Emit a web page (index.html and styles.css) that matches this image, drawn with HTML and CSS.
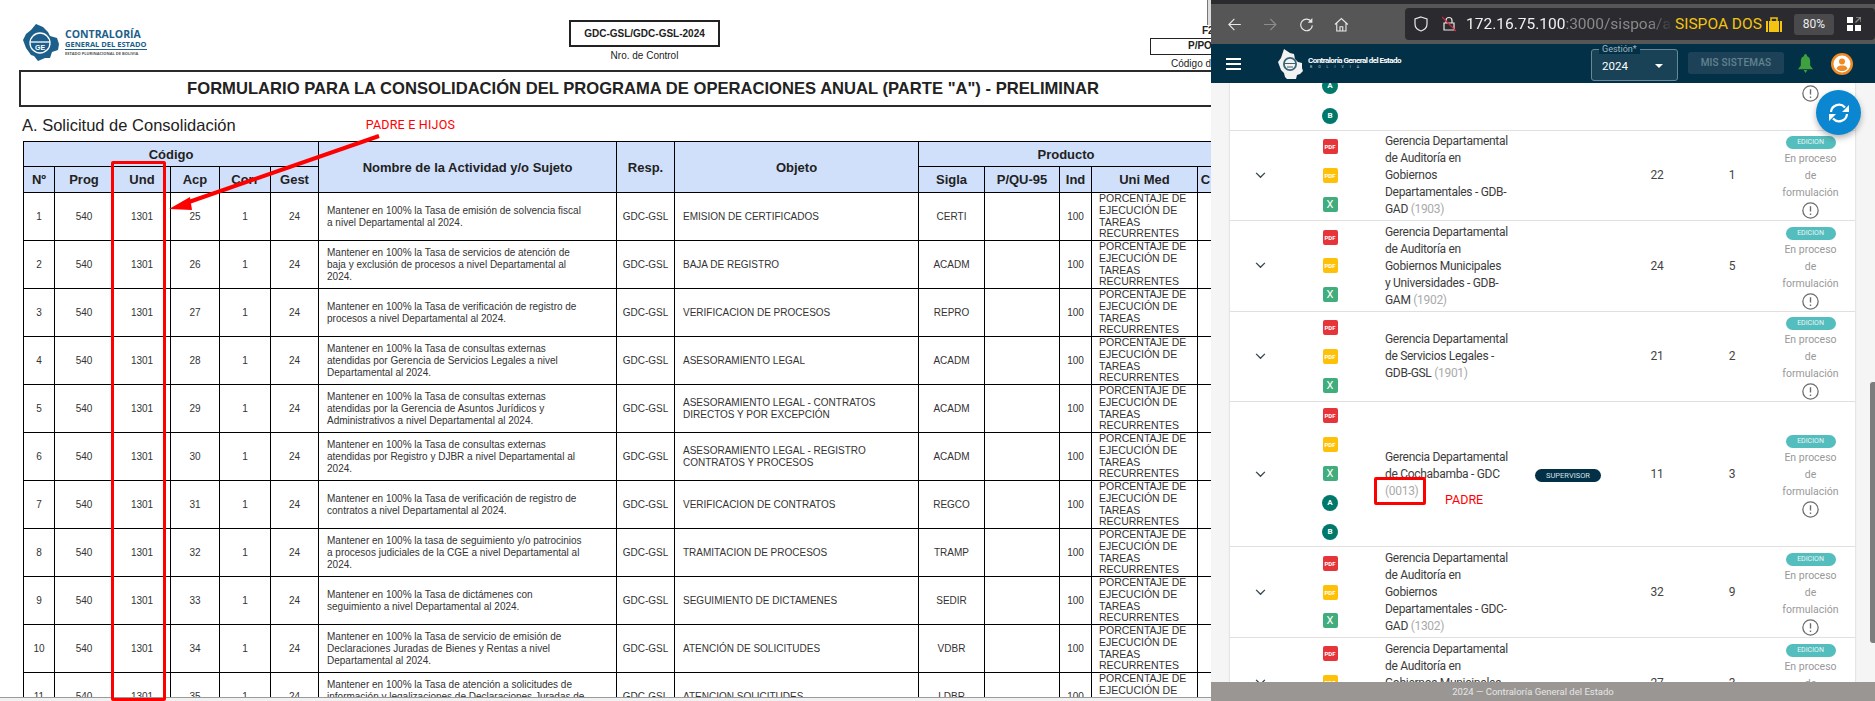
FILE: index.html
```html
<!DOCTYPE html>
<html lang="es">
<head>
  <meta charset="UTF-8" />
  <title>Formulario POA y SISPOA</title>
  <link rel="stylesheet" href="styles.css">
</head>
<body>
  <div class="shot">
    <main class="doc">
      <div class="doc-top">
        <div class="brand">
          <svg class="brand-map" viewBox="0 0 37 40"><path d="M8 8l5-6 7 3 5 5 2 4 7 2 2 6-1 6-6 2-2 6h-5l-7 3-4-5-3-1-5-7-3-8 3-6z" fill="#1d5f8a"/><circle cx="17" cy="21" r="10" fill="none" stroke="#fff" stroke-width="1.3"/><path d="M7 20h20" stroke="#fff" stroke-width="1.3"/><text x="17" y="28" class="brand-ge">GE</text></svg>
          <div class="brand-text">
            <div class="brand-a">CONTRALORÍA</div>
            <div class="brand-b">GENERAL DEL ESTADO</div>
            <div class="brand-c">ESTADO PLURINACIONAL DE BOLIVIA</div>
          </div>
        </div>
        <div class="control">
          <div class="control-box">GDC-GSL/GDC-GSL-2024</div>
          <div class="control-label">Nro. de Control</div>
        </div>
        <div class="code">
          <div class="code-f">F2</div>
          <div class="code-box">P/POA</div>
          <div class="code-label">Código de Formulario</div>
        </div>
      </div>
      <h1 class="doc-title">FORMULARIO PARA LA CONSOLIDACIÓN DEL PROGRAMA DE OPERACIONES ANUAL (PARTE "A") - PRELIMINAR</h1>
      <div class="doc-sub">
        <h2>A. Solicitud de Consolidación</h2>
        <span class="note">PADRE E HIJOS</span>
      </div>
      <table class="poa">
        <colgroup>
          <col class="c-n"><col class="c-prog"><col class="c-und"><col class="c-acp"><col class="c-corr"><col class="c-gest">
          <col class="c-name"><col class="c-resp"><col class="c-obj"><col class="c-sigla"><col class="c-pqu"><col class="c-ind"><col class="c-uni"><col class="c-c">
        </colgroup>
        <thead>
          <tr>
            <th colspan="6">Código</th>
            <th rowspan="2">Nombre de la Actividad y/o Sujeto</th>
            <th rowspan="2">Resp.</th>
            <th rowspan="2">Objeto</th>
            <th colspan="5">Producto</th>
          </tr>
          <tr class="head-sub">
            <th>Nº</th><th>Prog</th><th>Und</th><th>Acp</th><th>Corr</th><th>Gest</th>
            <th>Sigla</th><th>P/QU-95</th><th>Ind</th><th>Uni Med</th><th>C</th>
          </tr>
        </thead>
        <tbody id="poa-rows"></tbody>
      </table>
      <div class="screen-edge"></div>
      <div class="pdf-scroll"></div>
      <div class="und-mark"></div>
      <svg class="arrow" viewBox="0 0 214 77"><path d="M211 2L18 69" stroke="#f00" stroke-width="4"/><path d="M1 75l21-12 2 13z" fill="#f00"/></svg>
    </main>

    <section class="browser">
      <div class="chrome-strip"></div>
      <div class="toolbar">
        <svg class="tb-icon" viewBox="0 0 16 16"><path d="M15 8H2M8 2L2 8l6 6" fill="none" stroke="#e8e8e8" stroke-width="1.2"/></svg>
        <svg class="tb-icon" viewBox="0 0 16 16"><path d="M1 8h13M8 2l6 6-6 6" fill="none" stroke="#8d8d8d" stroke-width="1.2"/></svg>
        <svg class="tb-icon" viewBox="0 0 16 16"><path d="M13.5 5A6.3 6.3 0 1 0 14.5 9" fill="none" stroke="#e8e8e8" stroke-width="1.3"/><path d="M14.5 1v5h-5z" fill="#e8e8e8"/></svg>
        <svg class="tb-icon" viewBox="0 0 16 16"><path d="M1 8l7-6.5L15 8M3 6.5V15h10V6.5M6.5 15v-4.5h3V15" fill="none" stroke="#e8e8e8" stroke-width="1.2"/></svg>
        <div class="urlbar">
          <svg class="url-shield" viewBox="0 0 14 16"><path d="M7 1l6 2v5c0 4-3 6-6 7-3-1-6-3-6-7V3z" fill="none" stroke="#e8e8e8" stroke-width="1.2"/></svg>
          <svg class="url-lock" viewBox="0 0 14 16"><path d="M4 7V4.500a3 3 0 0 1 6 0V7M2 7h10v7H2z" fill="none" stroke="#e8e8e8" stroke-width="1.2"/><path d="M0 1l14 14" stroke="#e0243c" stroke-width="1.2"/></svg>
          <span class="url-text">172.16.75.100<span class="url-dim">:3000/sispoa/a</span></span>
          <span class="url-name">SISPOA DOS</span>
          <svg class="url-bag" viewBox="0 0 16 15"><path d="M0 4h2v11H0zM3 4h10v11H3zM14 4h2v11h-2z" fill="#f2c40f"/><path d="M5 4V1h6v3" fill="none" stroke="#f2c40f" stroke-width="1.5"/></svg>
          <span class="url-zoom">80%</span>
          <svg class="url-grid" viewBox="0 0 14 14"><path d="M0 0h6v6H0zM0 8h6v6H0zM8 8h6v6H8z" fill="#fff"/><path d="M9 0h5v5M14 0L8.5 5.500" fill="none" stroke="#8a8a8a" stroke-width="1.3"/></svg>
        </div>
      </div>
      <header class="appbar">
        <div class="burger"><i></i><i></i><i></i></div>
        <svg class="app-map" viewBox="0 0 25 30"><path d="M6 0l6 4 4 1 1 5 3 3 4 1v5l1 3-3 3-3 1-1 4-5 0-4 0-2-2-1-4-3-3-3-8 3-4z" fill="#f2f2f2"/><circle cx="12" cy="15" r="7" fill="#3b6275"/><circle cx="12" cy="15" r="5.2" fill="#f2f2f2"/><path d="M6 14.500h12M9 18h6" stroke="#3b6275" stroke-width="1.2"/></svg>
        <div class="app-name">
          <div class="app-name-a">Contraloría General del Estado</div>
          <div class="app-name-b">BOLIVIA</div>
        </div>
        <div class="gestion">
          <span class="gestion-label">Gestión*</span>
          <span class="gestion-val">2024</span>
          <span class="caret"></span>
        </div>
        <button class="mis">MIS SISTEMAS</button>
        <svg class="bell" viewBox="0 0 16 20"><path d="M8 0a1.500 1.500 0 0 1 1.500 2C12 3 13 5 13 8v4l3 4H0l3-4V8c0-3 1-5 3.500-6A1.500 1.500 0 0 1 8 0zM6 17h4l-2 3z" fill="#3ea13e"/></svg>
        <svg class="avatar" viewBox="0 0 22 22"><circle cx="11" cy="11" r="11" fill="#f08a24"/><circle cx="11" cy="11" r="8.5" fill="#fff"/><circle cx="11" cy="8.5" r="3" fill="#f08a24"/><path d="M5.500 15.500c1-2.500 3-3 5.500-3s4.500.5 5.500 3c-1.500 2-3.500 2.500-5.500 2.500s-4-.5-5.500-2.500z" fill="#f08a24"/></svg>
      </header>
      <div class="content">
        <div class="list" id="unit-list"></div>
        <span class="scroll-thumb"></span>
      </div>
      <button class="fab">
        <svg viewBox="0 0 24 24"><path d="M4 11a8 8 0 0 1 14-4.500M20 13a8 8 0 0 1-14 4.500" fill="none" stroke="#fff" stroke-width="2.2"/><path d="M22 4v7h-7zM2 20v-7h7z" fill="#fff"/></svg>
      </button>
      <footer class="app-foot">2024 — Contraloría General del Estado</footer>
      <div class="padre-mark"></div>
      <span class="padre-note">PADRE</span>
    </section>
  </div>

  <script>
    const rows = [
      ["25", "Mantener en 100% la Tasa de emisión de solvencia fiscal<br>a nivel Departamental al 2024.", "EMISION DE CERTIFICADOS", "CERTI"],
      ["26", "Mantener en 100% la Tasa de servicios de atención de<br>baja y exclusión de procesos a nivel Departamental al<br>2024.", "BAJA DE REGISTRO", "ACADM"],
      ["27", "Mantener en 100% la Tasa de verificación de registro de<br>procesos a nivel Departamental al 2024.", "VERIFICACION DE PROCESOS", "REPRO"],
      ["28", "Mantener en 100% la Tasa de consultas externas<br>atendidas por Gerencia de Servicios Legales a nivel<br>Departamental al 2024.", "ASESORAMIENTO LEGAL", "ACADM"],
      ["29", "Mantener en 100% la Tasa de consultas externas<br>atendidas por la Gerencia de Asuntos Jurídicos y<br>Administrativos a nivel Departamental al 2024.", "ASESORAMIENTO LEGAL - CONTRATOS<br>DIRECTOS Y POR EXCEPCIÓN", "ACADM"],
      ["30", "Mantener en 100% la Tasa de consultas externas<br>atendidas por Registro y DJBR a nivel Departamental al<br>2024.", "ASESORAMIENTO LEGAL - REGISTRO<br>CONTRATOS Y PROCESOS", "ACADM"],
      ["31", "Mantener en 100% la Tasa de verificación de registro de<br>contratos a nivel Departamental al 2024.", "VERIFICACION DE CONTRATOS", "REGCO"],
      ["32", "Mantener en 100% la tasa de seguimiento y/o patrocinios<br>a procesos judiciales de la CGE a nivel Departamental al<br>2024.", "TRAMITACION DE PROCESOS", "TRAMP"],
      ["33", "Mantener en 100% la Tasa de dictámenes con<br>seguimiento a  nivel Departamental al 2024.", "SEGUIMIENTO DE DICTAMENES", "SEDIR"],
      ["34", "Mantener en 100% la Tasa de servicio de emisión de<br>Declaraciones Juradas de Bienes y Rentas a nivel<br>Departamental al 2024.", "ATENCIÓN DE SOLICITUDES", "VDBR"],
      ["35", "Mantener en 100% la Tasa de atención a solicitudes de<br>información y legalizaciones de  Declaraciones Juradas de<br>Bienes y Rentas.", "ATENCION SOLICITUDES", "LDBR"]
    ];

    const units = [
      { name: "Gerencia Departamental<br>de La Paz - GDL<br>", code: "0012", a: "", b: "", parent: true },
      { name: "Gerencia Departamental<br>de Auditoría en<br>Gobiernos<br>Departamentales - GDB-<br>GAD", code: "1903", a: "22", b: "1" },
      { name: "Gerencia Departamental<br>de Auditoría en<br>Gobiernos Municipales<br>y Universidades - GDB-<br>GAM", code: "1902", a: "24", b: "5" },
      { name: "Gerencia Departamental<br>de Servicios Legales -<br>GDB-GSL", code: "1901", a: "21", b: "2" },
      { name: "Gerencia Departamental<br>de Cochabamba - GDC<br>", code: "0013", a: "11", b: "3", parent: true, chip: true },
      { name: "Gerencia Departamental<br>de Auditoría en<br>Gobiernos<br>Departamentales - GDC-<br>GAD", code: "1302", a: "32", b: "9" },
      { name: "Gerencia Departamental<br>de Auditoría en<br>Gobiernos Municipales<br>y Universidades - GDC-<br>GAM", code: "1301", a: "27", b: "3" }
    ];

    function renderRows() {
      const body = document.getElementById("poa-rows");
      rows.forEach((r, i) => {
        const tr = document.createElement("tr");
        tr.innerHTML = `
          <td>${i + 1}</td><td>540</td><td>1301</td><td>${r[0]}</td><td>1</td><td>24</td>
          <td class="left">${r[1]}</td><td>GDC-GSL</td><td class="left">${r[2]}</td><td>${r[3]}</td><td></td><td>100</td>
          <td class="left uni">PORCENTAJE DE EJECUCIÓN DE TAREAS RECURRENTES</td><td></td>
        `;
        body.appendChild(tr);
      });
    }

    function renderUnits() {
      const list = document.getElementById("unit-list");
      units.forEach(u => {
        const row = document.createElement("div");
        row.className = "unit";
        const round = u.parent ? '<span class="ic round">A</span><span class="ic round">B</span>' : "";
        row.innerHTML = `
          <svg class="chev" viewBox="0 0 12 8"><path d="M1 1l5 5 5-5" fill="none" stroke="#37474f" stroke-width="1.5"/></svg>
          <div class="icons">
            <span class="ic red">PDF</span><span class="ic amber">PDF</span><span class="ic green">X</span>${round}
          </div>
          <div class="uname">${u.name} <span class="ucode">(${u.code})</span></div>
          <div class="uchip">${u.chip ? '<span class="chip">SUPERVISOR</span>' : ""}</div>
          <div class="unum">${u.a}</div>
          <div class="unum">${u.b}</div>
          <div class="ustatus">
            <span class="edicion">EDICION</span>
            <span>En proceso</span><span>de</span><span>formulación</span>
            <svg class="warn" viewBox="0 0 16 16"><circle cx="8" cy="8" r="7.2" fill="none" stroke="#6c6c6c" stroke-width="1.2"/><path d="M8 4v5M8 10.800v1.400" stroke="#6c6c6c" stroke-width="1.3"/></svg>
          </div>
        `;
        list.appendChild(row);
      });
    }

    renderRows();
    renderUnits();
  </script>
</body>
</html>
```

FILE: styles.css
```css
* {
  margin: 0;
  padding: 0;
  box-sizing: border-box;
}

html, body {
  height: 100%;
  overflow: hidden;
  background: #fff;
}

.shot {
  display: flex;
  width: 1875px;
  height: 701px;
  overflow: hidden;
}

/* left: the pdf */
.doc {
  position: relative;
  width: 1211px;
  flex: none;
  overflow: hidden;
  background: #fff;
  font-family: "Liberation Sans", sans-serif;
  color: #222;
}

.doc-top {
  position: relative;
  height: 70px;
}

.brand {
  display: flex;
  position: absolute;
  left: 23px;
  top: 22px;
  gap: 5px;
  align-items: center;
}

.brand-map {
  width: 37px;
  height: 40px;
}

.brand-ge {
  fill: #fff;
  font-size: 7px;
  font-weight: 700;
  text-anchor: middle;
}

.brand-text {
  color: #1d5f8a;
  font-family: "Open Sans", sans-serif;
  font-weight: 700;
  white-space: nowrap;
}

.brand-a {
  font-size: 10.5px;
  line-height: 12px;
}

.brand-b {
  font-size: 7.5px;
  line-height: 9px;
  border-bottom: 1px solid #1d5f8a;
}

.brand-c {
  font-size: 4px;
  line-height: 7px;
  color: #555;
}

.control {
  position: absolute;
  left: 569px;
  top: 20px;
  width: 151px;
  text-align: center;
}

.control-box {
  height: 27px;
  line-height: 23px;
  border: 2px solid #222;
  font-size: 10px;
  font-weight: 700;
}

.control-label {
  margin-top: 2px;
  font-size: 10px;
  line-height: 13px;
}

.code {
  position: absolute;
  left: 1150px;
  top: 24px;
  width: 130px;
  font-size: 10px;
  white-space: nowrap;
}

.code-f {
  padding-left: 52px;
  font-weight: 700;
  line-height: 14px;
}

.code-box {
  height: 17px;
  padding-left: 37px;
  line-height: 14px;
  border: 1.5px solid #222;
  font-weight: 700;
}

.code-label {
  padding-left: 21px;
  line-height: 17px;
}

.doc-title {
  margin-left: 19px;
  margin-right: -56px;
  height: 37px;
  line-height: 33px;
  border: 2px solid #2b2b2b;
  text-align: center;
  font-size: 16.6px;
  font-weight: 700;
  white-space: nowrap;
}

.doc-sub {
  display: flex;
  height: 34px;
  padding: 2px 0 0 22px;
  align-items: center;
  gap: 130px;
}

.doc-sub h2 {
  font-size: 16.5px;
  font-weight: 400;
  white-space: nowrap;
}

.note {
  color: #f00;
  font-family: Roboto, sans-serif;
  font-size: 12.5px;
  letter-spacing: .2px;
  margin-top: -2px;
}

.poa {
  margin-left: 23px;
  width: 1190px;
  table-layout: fixed;
  border-collapse: collapse;
}

.c-n { width: 31px; }
.c-prog { width: 59px; }
.c-und { width: 57px; }
.c-acp { width: 49px; }
.c-corr { width: 51px; }
.c-gest { width: 48px; }
.c-name { width: 298px; }
.c-resp { width: 58px; }
.c-obj { width: 244px; }
.c-sigla { width: 66px; }
.c-pqu { width: 75px; }
.c-ind { width: 32px; }
.c-uni { width: 106px; }
.c-c { width: 16px; }

.poa th,
.poa td {
  border: 1px solid #000;
  text-align: center;
  overflow: hidden;
}

.poa th {
  height: 25px;
  background: #d0e0fb;
  font-size: 13px;
  font-weight: 700;
  white-space: nowrap;
}

.poa .head-sub th {
  height: 26px;
}

.poa td {
  height: 48px;
  font-size: 10px;
  line-height: 12px;
  color: #333;
}

.poa td.left {
  padding-left: 8px;
  text-align: left;
}

.poa td.uni {
  padding: 0 2px 0 7px;
  font-size: 10.5px;
  line-height: 11.7px;
}

.screen-edge {
  position: absolute;
  left: 0;
  right: 0;
  bottom: 0;
  height: 4px;
  background: #f1f1f1;
  border-top: 1px solid #9a9a9a;
}

.pdf-scroll {
  position: absolute;
  right: 0;
  top: 0;
  width: 4px;
  height: 25px;
  background: #ddd;
  border-left: 1px solid #777;
}

.und-mark {
  position: absolute;
  left: 111px;
  top: 161px;
  width: 55px;
  height: 540px;
  border: 3px solid #f00;
  border-radius: 2px;
}

.arrow {
  position: absolute;
  left: 168px;
  top: 134px;
  width: 214px;
  height: 77px;
}

/* right: the browser window */
.browser {
  position: relative;
  flex: 1;
  display: flex;
  flex-direction: column;
  overflow: hidden;
  background: #f5f5f5;
  font-family: Roboto, sans-serif;
}

.chrome-strip {
  height: 4px;
  flex: none;
  background: #2b2a2e;
}

.toolbar {
  display: flex;
  height: 40px;
  flex: none;
  align-items: center;
  background: #565656;
  padding-left: 16px;
}

.tb-icon {
  width: 15px;
  height: 15px;
  margin-right: 21px;
  margin-top: 1px;
}

.urlbar {
  display: flex;
  align-items: center;
  width: 470px;
  height: 32px;
  margin-left: 35px;
  background: #2b2a2e;
  border-radius: 4px;
  padding-left: 9px;
  flex: none;
}

.url-shield {
  width: 14px;
  height: 16px;
}

.url-lock {
  width: 14px;
  height: 16px;
  margin-left: 14px;
}

.url-text {
  display: block;
  width: 209px;
  margin-left: 10px;
  overflow: hidden;
  white-space: nowrap;
  font-size: 15.5px;
  color: #f0f0f0;
  -webkit-mask-image: linear-gradient(to right, #000 88%, transparent 99%);
  mask-image: linear-gradient(to right, #000 88%, transparent 99%);
}

.url-dim {
  color: #8a8a8a;
}

.url-name {
  color: #f2c40f;
  font-size: 15.5px;
  white-space: nowrap;
}

.url-bag {
  width: 16px;
  height: 15px;
  margin-left: 4px;
}

.url-zoom {
  width: 40px;
  height: 21px;
  margin-left: 12px;
  border-radius: 3px;
  background: #4a4a4d;
  color: #ededed;
  font-size: 12px;
  line-height: 21px;
  text-align: center;
}

.url-grid {
  width: 14px;
  height: 14px;
  margin-left: 13px;
}

.appbar {
  position: relative;
  z-index: 3;
  display: flex;
  height: 39px;
  flex: none;
  align-items: center;
  background: #023047;
  color: #fff;
}

.burger {
  display: flex;
  flex-direction: column;
  gap: 3px;
  width: 15px;
  margin-left: 15px;
}

.burger i {
  display: block;
  height: 2px;
  background: #fff;
}

.app-map {
  width: 25px;
  height: 30px;
  margin-left: 37px;
}

.app-name {
  width: 283px;
  margin-left: 5px;
  margin-top: -2px;
  white-space: nowrap;
}

.app-name-a {
  font-size: 8px;
  font-weight: 700;
  line-height: 9px;
  letter-spacing: -.55px;
}

.app-name-b {
  font-size: 3.5px;
  letter-spacing: 6px;
  line-height: 5px;
  padding-left: 2px;
  color: #ccd;
}

.gestion {
  position: relative;
  display: flex;
  align-items: center;
  width: 87px;
  height: 32px;
  margin-top: 3px;
  padding-left: 10px;
  background: #1a4257;
  border: 1px solid #6a8797;
  border-radius: 3px;
  flex: none;
}

.gestion-label {
  position: absolute;
  left: 7px;
  top: -6px;
  padding: 0 3px;
  background: #023047;
  color: #a5b5be;
  font-size: 9px;
  line-height: 10px;
}

.gestion-val {
  font-size: 11.5px;
  margin-top: 2px;
}

.caret {
  position: absolute;
  left: 63px;
  top: 14px;
  border-style: solid;
  border-width: 4px 4px 0;
  border-color: #fff transparent transparent;
}

.mis {
  width: 96px;
  height: 22px;
  margin-left: 10px;
  margin-top: -2px;
  border: 0;
  border-radius: 3px;
  background: #1d4257;
  color: #648291;
  font-family: Roboto, sans-serif;
  font-size: 10px;
  font-weight: 500;
  letter-spacing: .2px;
  flex: none;
}

.bell {
  width: 15px;
  height: 19px;
  margin-left: 14px;
  flex: none;
}

.avatar {
  width: 22px;
  height: 22px;
  margin-left: 18px;
  flex: none;
}

.content {
  position: relative;
  flex: 1;
  overflow: hidden;
  padding: 0 20px 0 19px;
}

.list {
  margin-top: -97.5px;
  background: #fff;
  box-shadow: 0 0 2px rgba(0,0,0,0.2);
}

.unit {
  display: grid;
  grid-template-columns: 70px 85px 145px 76px 102px 48px 1fr;
  align-items: center;
  min-height: 90.5px;
  border-bottom: 1px solid #e0e0e0;
  color: #333;
  font-size: 12px;
  letter-spacing: -.3px;
}

.chev {
  width: 11px;
  height: 7px;
  margin-left: 25px;
}

.icons {
  display: flex;
  flex-direction: column;
  align-items: center;
  gap: 13.8px;
  padding: 6px 0;
  width: 60px;
}

.ic {
  display: block;
  width: 15px;
  height: 15px;
  border-radius: 2px;
  color: #fff;
  font-size: 6px;
  font-weight: 700;
  letter-spacing: 0;
  line-height: 15px;
  text-align: center;
}

.red { background: #e5343a; }
.amber { background: #ffc107; }
.green { background: #41ad7c; font-size: 11px; font-weight: 400; }

.round {
  width: 16px;
  height: 16px;
  border-radius: 50%;
  background: #00796b;
  font-size: 8px;
  line-height: 16px;
}

.uname {
  padding-top: 1px;
  line-height: 17px;
  color: #3c3c3c;
  white-space: nowrap;
}

.ucode {
  color: #aaa;
}

.uchip {
  text-align: center;
}

.chip {
  display: inline-block;
  width: 66px;
  height: 13px;
  border-radius: 7px;
  background: #023047;
  color: #d5e0e6;
  font-size: 7.5px;
  letter-spacing: 0;
  line-height: 13px;
}

.unum {
  text-align: center;
  color: #444;
}

.ustatus {
  display: flex;
  flex-direction: column;
  align-items: center;
  color: #999;
  font-size: 10.5px;
  letter-spacing: 0;
  line-height: 17px;
  padding: 5px 0 0 10px;
}

.edicion {
  width: 50px;
  height: 13px;
  border-radius: 7px;
  background: #54bdbd;
  color: #e9f7f7;
  font-size: 7px;
  line-height: 13px;
  text-align: center;
  margin-bottom: 1px;
}

.warn {
  width: 17px;
  height: 17px;
  margin-top: 1px;
}

.scroll-thumb {
  position: absolute;
  right: 0;
  top: 299px;
  width: 5px;
  height: 261px;
  background: #7d7d7d;
  border-radius: 3px 0 0 3px;
}

.fab {
  position: absolute;
  left: 605px;
  top: 90px;
  width: 45px;
  height: 45px;
  border: 0;
  border-radius: 50%;
  background: #0a87d0;
  box-shadow: 0 3px 6px rgba(0,0,0,0.3);
  z-index: 4;
}

.fab svg {
  display: block;
  width: 24px;
  height: 24px;
  margin: auto;
}

.app-foot {
  position: relative;
  z-index: 3;
  height: 19px;
  flex: none;
  padding-right: 20px;
  background: #9a9693;
  color: #e6e6e6;
  font-size: 9.5px;
  line-height: 19px;
  text-align: center;
}

.padre-mark {
  position: absolute;
  left: 163px;
  top: 477px;
  width: 52px;
  height: 28px;
  border: 3px solid #f00;
  border-radius: 2px;
  z-index: 2;
}

.padre-note {
  position: absolute;
  left: 234px;
  top: 492px;
  color: #f00;
  font-size: 12.5px;
  z-index: 2;
}
```
